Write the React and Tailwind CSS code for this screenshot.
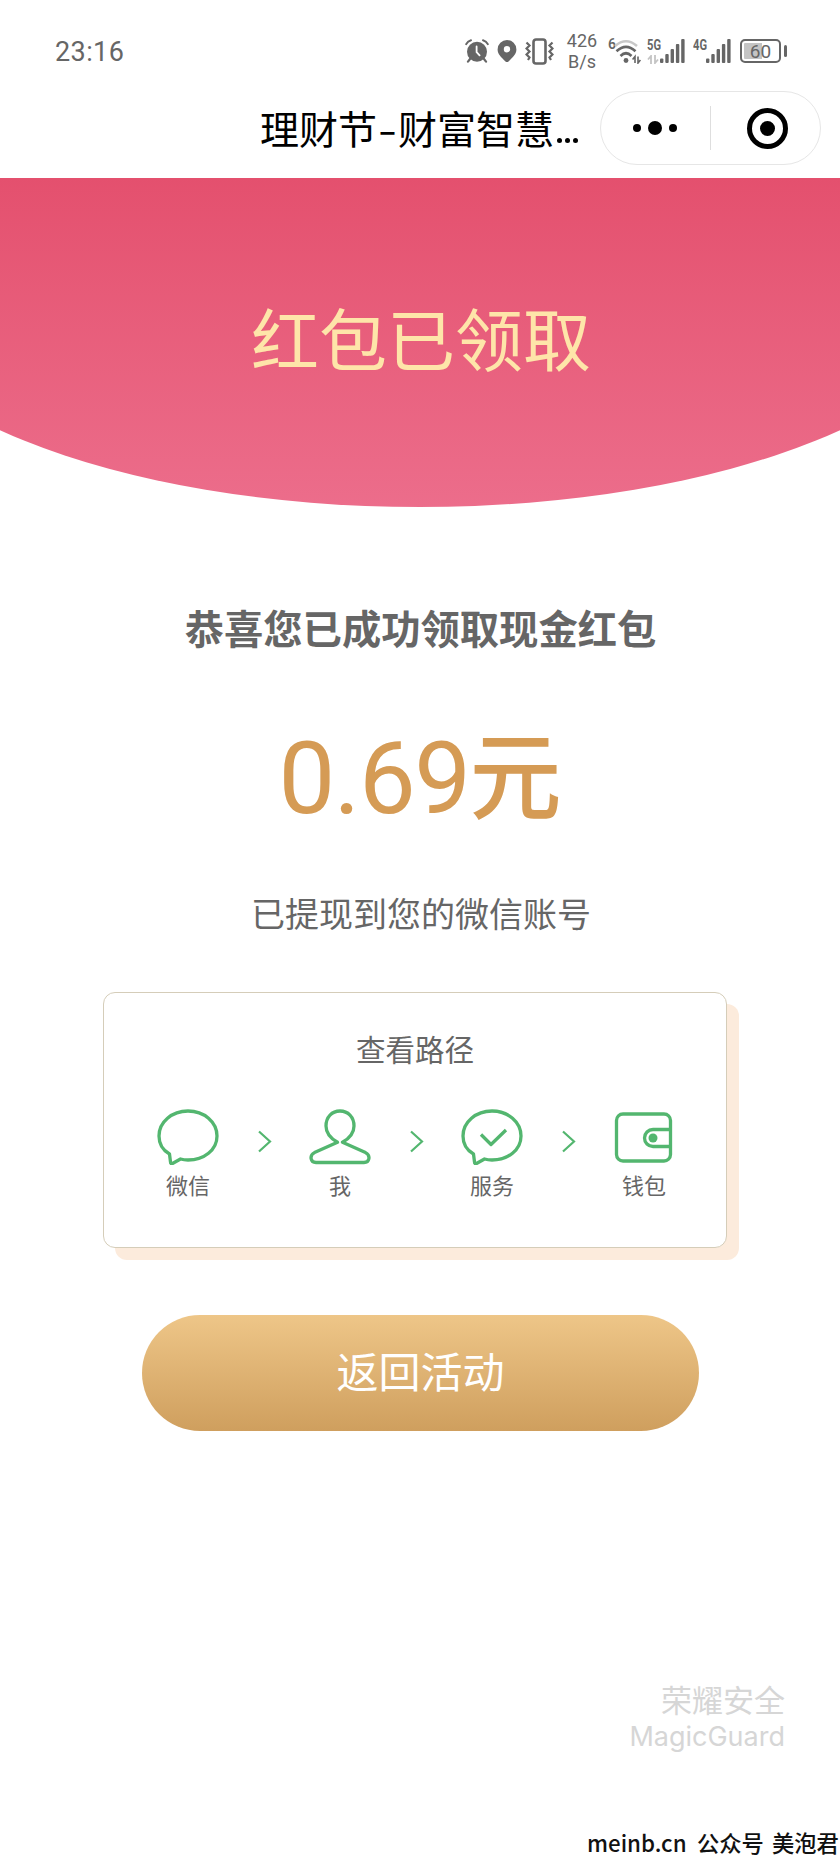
import React from "react";

const steps = [
  { id: "wechat", label: "微信", Icon: ChatIcon },
  { id: "me", label: "我", Icon: PersonIcon },
  { id: "service", label: "服务", Icon: ServiceIcon },
  { id: "wallet", label: "钱包", Icon: WalletIcon },
];

function AlarmIcon() {
  return (
    <svg width="24" height="24" viewBox="0 0 24 24" fill="none" stroke="#666" strokeLinecap="round">
      <circle cx="12" cy="12.8" r="10" fill="#666" stroke="none" />
      <path d="M1.200 5.200Q2.600 2.200 6 1.200M22.800 5.200Q21.400 2.200 18 1.200" strokeWidth="2" />
      <path d="M5 20l-2 2.600M19 20l2 2.600" strokeWidth="2.200" />
      <path d="M11.600 7.400v5.800l3 3.200" stroke="#fff" strokeWidth="1.800" />
    </svg>
  );
}

function PinIcon() {
  return (
    <svg width="20" height="24" viewBox="0 0 20 24">
      <path
        fill="#666"
        fillRule="evenodd"
        d="M10 1a9.400 9.400 0 0 1 9.400 9.400c0 4.600-3.600 7.600-7.600 11.800q-1.800 1.700-3.600 0C4.200 18 .6 15 .6 10.400A9.400 9.400 0 0 1 10 1zM10 7a3.200 3.200 0 1 0 0 6.400a3.200 3.200 0 0 0 0-6.400z"
      />
    </svg>
  );
}

function VibrateIcon() {
  return (
    <svg width="29" height="27" viewBox="0 0 29 27" fill="none" stroke="#666" strokeWidth="2.600">
      <rect x="8.500" y="1.500" width="12" height="24" rx="2.500" />
      <path d="M1.500 4.500l3 3-3 3 3 3-3 3 3 3-1.500 2.500M27.500 4.500l-3 3 3 3-3 3 3 3-3 3 1.500 2.500" strokeWidth="2.200" />
    </svg>
  );
}

function WifiIcon() {
  return (
    <svg width="28" height="25" viewBox="0 0 28 25" fill="none" stroke="#666" strokeWidth="2.600">
      <path d="M1 7Q12 -2.500 23 7" stroke="#c8c8c8" />
      <path d="M2.500 12.200Q12 3.500 21.500 12.200" />
      <path d="M6.500 17Q12 11.500 17.500 17" />
      <circle cx="12" cy="21.500" r="2.400" fill="#666" stroke="none" />
      <path d="M21 24v-6.500l-2.400 3M24 17.500v6.500l2.400-3" strokeWidth="1.600" />
    </svg>
  );
}

function SignalBars() {
  return (
    <svg width="25" height="24" viewBox="0 0 25 24" fill="#666">
      <rect x="0" y="19.500" width="3.400" height="4.500" rx="1" />
      <rect x="5.300" y="15" width="3.400" height="9" rx="1" />
      <rect x="10.600" y="10" width="3.400" height="14" rx="1" />
      <rect x="15.900" y="5" width="3.400" height="19" rx="1" />
      <rect x="21.200" y="0" width="3.400" height="24" rx="1" />
    </svg>
  );
}

function StatusBar() {
  return (
    <div className="flex h-[90px] pl-[55px] pt-[38px] font-[Roboto,sans-serif] text-[#666]">
      <span className="h-7 w-[410px] text-[27px] leading-[28px] tracking-[0.4px]">23:16</span>
      <div className="flex h-[26px] items-start">
        <div className="pt-px"><AlarmIcon /></div>
        <div className="ml-2 pt-px"><PinIcon /></div>
        <div className="ml-2"><VibrateIcon /></div>
        <div className="-mt-[7px] ml-3 w-8 text-center text-[18px] leading-[20.5px]">
          <p>426</p>
          <p>B/s</p>
        </div>
        <span className="ml-2.5 text-[14px] font-semibold leading-[13px]">6</span>
        <div className="-ml-0.5 pt-px"><WifiIcon /></div>
        <div className="ml-[5px] pt-px">
          <span className="block w-[15px] origin-left scale-x-72 text-[15.5px] font-bold leading-3">5G</span>
          <svg className="mt-1" width="12" height="9" viewBox="0 0 12 9" fill="none" stroke="#c4c4c4" strokeWidth="1.800">
            <path d="M4 9V1L1 4.500M8 0v8l3-3.500" />
          </svg>
        </div>
        <div className="-ml-0.5 pt-px"><SignalBars /></div>
        <span className="ml-2 w-[13px] origin-left scale-x-72 pt-px text-[15.5px] font-bold leading-3">4G</span>
        <div className="pt-px"><SignalBars /></div>
        <div className="ml-[9px] mt-px flex h-6 w-[41px] items-center justify-center rounded-[5px] border-2 border-[#666] bg-linear-to-r from-[#c4c4c4] from-55% to-white to-55% text-[19px] leading-none shadow-[inset_0_0_0_2px_white]">
          60
        </div>
        <div className="ml-[3px] mt-[7px] h-3 w-[3px] rounded-xs bg-[#666]" />
      </div>
    </div>
  );
}

function NavBar() {
  return (
    <div className="flex h-22 pl-[260px]">
      <h1 className="flex h-[74px] w-[340px] items-center text-[39px] text-black">
        理财节<span className="w-[21px] scale-x-140 text-center">-</span>财富智慧
        <span className="ml-[3px] mt-[27px] flex gap-[3px]">
          <i className="size-[5px] rounded-full bg-black" />
          <i className="size-[5px] rounded-full bg-black" />
          <i className="size-[5px] rounded-full bg-black" />
        </span>
      </h1>
      <div className="mt-px flex h-[74px] w-[221px] items-center rounded-full border border-[#e6e6e6]">
        <div className="flex w-[109px] items-center justify-center gap-[7px] pr-0.5">
          <span className="size-2 rounded-full bg-black" />
          <span className="size-3.5 rounded-full bg-black" />
          <span className="size-2 rounded-full bg-black" />
        </div>
        <div className="h-11 w-px bg-[#dedede]" />
        <div className="ml-9 flex size-[41px] items-center justify-center rounded-full border-[5px] border-black">
          <span className="size-[15px] rounded-full bg-black" />
        </div>
      </div>
    </div>
  );
}

function Bubble() {
  return <path d="M12.500 45C5.500 41 2 34 2 27C2 13 15 2 31 2s29 11 29 25-13 24-29 24q-4 0-7.500-1l-8 4.500q-2 .8-2-1.500z" />;
}

function ChatIcon() {
  return (
    <svg width="62" height="56" viewBox="0 0 62 56" fill="none" stroke="#53b66f" strokeWidth="3.300" strokeLinejoin="round">
      <Bubble />
    </svg>
  );
}

function ServiceIcon() {
  return (
    <svg width="62" height="56" viewBox="0 0 62 56" fill="none" stroke="#53b66f" strokeWidth="3.300" strokeLinejoin="round">
      <Bubble />
      <path d="M20 25.500L30 35.500L45 21" />
    </svg>
  );
}

function PersonIcon() {
  return (
    <svg width="62" height="56" viewBox="0 0 62 56" fill="none" stroke="#53b66f" strokeWidth="3.300" strokeLinejoin="round">
      <path d="M28.500 33.300C21 29 17 24 17 17C17 8 23 2 31 2s14 6 14 15c0 7-4 12-11.500 16.300L56.500 43.600c5.500 3 4 9.900-1.500 9.900H7c-5.500 0-7-6.900-1.500-9.900z" />
    </svg>
  );
}

function WalletIcon() {
  return (
    <svg width="62" height="56" viewBox="0 0 62 56" fill="none" stroke="#53b66f" strokeWidth="3.300">
      <rect x="3.500" y="5" width="54" height="47" rx="6.500" />
      <path d="M57.500 20.500H40a8.500 8.500 0 0 0 0 17H57.500" />
      <circle cx="40" cy="29" r="4.500" fill="#53b66f" stroke="none" />
    </svg>
  );
}

function PathCard() {
  return (
    <div className="ml-[103px] mt-[55px] h-64 w-[624px] rounded-xl border-[1.5px] border-[#d5cdb9] bg-white shadow-[12px_12px_0_0_#fcebdc]">
      <p className="mt-[33px] text-center text-[29.5px] leading-[44px] text-[#666]">查看路径</p>
      <ul className="mt-[39px] flex pl-[53px]">
        {steps.map(({ id, label, Icon }, index) => (
          <li key={id} className="flex">
            <div className="flex w-[62px] flex-col items-center">
              <Icon />
              <span className="mt-[3px] text-[22px] leading-8 whitespace-nowrap text-[#666]">{label}</span>
            </div>
            {/* no arrow after the last step */}
            {index < steps.length - 1 && (
              <svg className="ml-[39px] mr-[37px] mt-[21px]" width="14" height="23" viewBox="0 0 14 23" fill="none" stroke="#53b66f" strokeWidth="2.200">
                <path d="M1 1.500L12 11.500L1 21.500" />
              </svg>
            )}
          </li>
        ))}
      </ul>
    </div>
  );
}

function App() {
  return (
    <div className="flex h-[1864px] w-[840px] flex-col overflow-hidden bg-white font-['Noto_Sans_CJK_SC',sans-serif]">
      <StatusBar />
      <NavBar />

      <div className="h-[329px] bg-linear-to-b from-[#e4506e] to-[#ec6d8b] pl-0.5 pt-[109px] text-center [clip-path:ellipse(560px_227px_at_50%_102px)]">
        <h2 className="text-[68px] leading-[100px] text-[#fee5a9]">红包已领取</h2>
      </div>

      <p className="mt-[97px] pl-px text-center text-[39.3px] font-bold leading-[46px] text-[#666]">恭喜您已成功领取现金红包</p>

      <div className="mt-[63px] flex h-[120px] items-baseline justify-center leading-[120px] text-[#d59b55]">
        <span className="font-[Roboto,sans-serif] text-[101px] tracking-[-1.5px]">0.69</span>
        <span className="origin-bottom scale-y-104 text-[92px] font-medium">元</span>
      </div>

      <p className="mt-[56px] pl-0.5 text-center text-[34px] leading-[48px] text-[#666]">已提现到您的微信账号</p>

      <PathCard />

      <button className="ml-[142px] mt-[67px] h-[116px] w-[557px] rounded-full bg-linear-to-b from-[#eec688] to-[#cf9f5e] pb-[7px] text-[42px] text-white">
        返回活动
      </button>

      <div className="mt-[246px] pr-[55px] text-right text-[#d6d6d6]">
        <p className="text-[31px] leading-[44px]">荣耀安全</p>
        <p className="mt-px font-[Inter,sans-serif] text-[27px] leading-[30px]">MagicGuard</p>
      </div>

      <p className="mt-[73px] flex pl-[587px] text-[22.3px] font-medium leading-[34px] whitespace-nowrap text-[#111]">
        <span className="w-[110px]">meinb.cn</span>
        <span className="w-[75px]">公众号</span>
        <span>美泡君</span>
      </p>
    </div>
  );
}

export default App;
